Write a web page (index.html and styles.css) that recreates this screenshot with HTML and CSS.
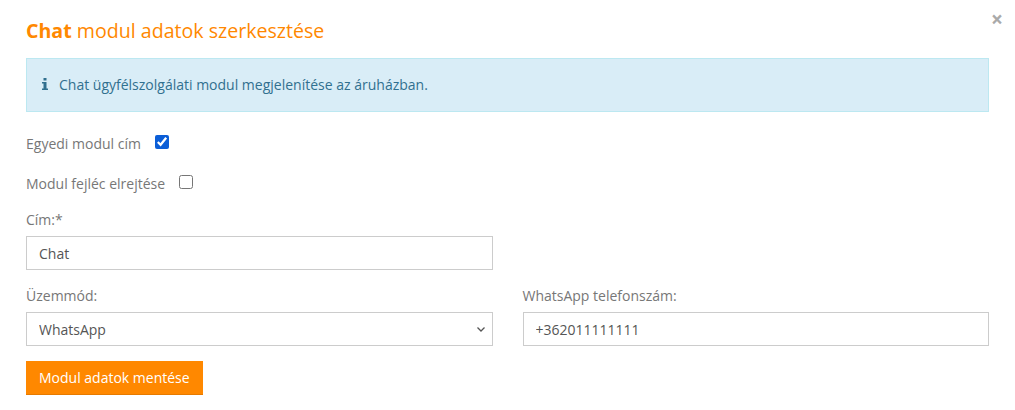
FILE: index.html
```html
<!DOCTYPE html>
<html lang="hu">
<head>
    <meta charset="UTF-8">
    <meta name="viewport" content="width=device-width, initial-scale=1.0">
    <title>Chat modul adatok szerkesztése</title>
    <link rel="stylesheet" href="styles.css">
</head>
<body>
    <div class="modal">
        <button class="close" type="button">×</button>
        <h2 class="title"><strong>Chat</strong> modul adatok szerkesztése</h2>

        <div class="info">
            <svg class="info-icon" viewBox="0 0 6 12" width="6" height="12">
                <rect x="1.500" y="0" width="3" height="2.500" fill="#31708f"/>
                <path d="M0 4h4.500v6.500H6V12H0v-1.500h1.500V5.500H0z" fill="#31708f"/>
            </svg>
            <span>Chat ügyfélszolgálati modul megjelenítése az áruházban.</span>
        </div>

        <label class="check-row">
            <span>Egyedi modul cím</span>
            <input type="checkbox" checked>
        </label>
        <label class="check-row">
            <span>Modul fejléc elrejtése</span>
            <input type="checkbox">
        </label>

        <div class="columns">
            <div class="field">
                <label for="cim">Cím:*</label>
                <input id="cim" type="text" value="Chat">
            </div>
        </div>

        <div class="columns columns-tight">
            <div class="field">
                <label for="uzemmod">Üzemmód:</label>
                <select id="uzemmod">
                    <option>WhatsApp</option>
                </select>
            </div>
            <div class="field">
                <label for="telefon">WhatsApp telefonszám:</label>
                <input id="telefon" type="text" value="+362011111111">
            </div>
        </div>

        <button class="save" type="button">Modul adatok mentése</button>
    </div>
</body>
</html>
```

FILE: styles.css
```css
*{
    margin: 0;
    padding: 0;
    box-sizing: border-box;
}
body{
    background-color: #fff;
    font-family: "Open Sans", sans-serif;
    font-size: 14px;
    color: #777;
}
.modal{
    position: relative;
    width: 1015px;
    height: 410px;
    padding: 19px 26px 0 26px;
}
.close{
    position: absolute;
    top: 9px;
    right: 12px;
    border: none;
    background: none;
    font-family: "Open Sans", sans-serif;
    font-size: 21px;
    font-weight: 700;
    line-height: 20px;
    color: #aaa;
}
.title{
    font-size: 19.6px;
    font-weight: 400;
    line-height: 24px;
    color: #ff8800;
}
.title strong{
    font-weight: 700;
}
.info{
    display: flex;
    align-items: center;
    gap: 11px;
    height: 54px;
    margin-top: 15px;
    padding: 0 0 2px 15px;
    background-color: #d9edf7;
    border: 1px solid #bce8f1;
    color: #31708f;
}
.check-row{
    display: flex;
    align-items: center;
    gap: 14px;
    height: 20px;
    margin-top: 20px;
    position: relative;
    top: 1px;
}
.check-row input{
    width: 14px;
    height: 14px;
    margin-top: -3px;
    accent-color: #0b5ed7;
}
.columns{
    display: flex;
    gap: 30px;
    margin-top: 18px;
}
.columns-tight{
    margin-top: 16px;
}
.field{
    width: 467px;
}
.field label{
    display: block;
    line-height: 20px;
    margin-bottom: 6px;
}
.field input,
.field select{
    display: block;
    width: 100%;
    height: 34px;
    padding: 0 12px;
    background-color: #fff;
    border: 1px solid #ccc;
    border-radius: 0;
    font-family: "Open Sans", sans-serif;
    font-size: 14px;
    color: #555;
}
.field select{
    appearance: none;
    background-image: url("data:image/svg+xml,%3Csvg xmlns='http://www.w3.org/2000/svg' width='8' height='5' viewBox='0 0 8 5'%3E%3Cpath d='M.5.5L4 4 7.500.5' fill='none' stroke='%23555' stroke-width='1.300'/%3E%3C/svg%3E");
    background-repeat: no-repeat;
    background-position: right 7px center;
}
.save{
    display: block;
    height: 34px;
    margin-top: 15px;
    padding: 0 13px;
    background-color: #ff8800;
    border: none;
    border-bottom: 1px solid #e67a00;
    font-family: "Open Sans", sans-serif;
    font-size: 14px;
    color: #fff;
}
```
